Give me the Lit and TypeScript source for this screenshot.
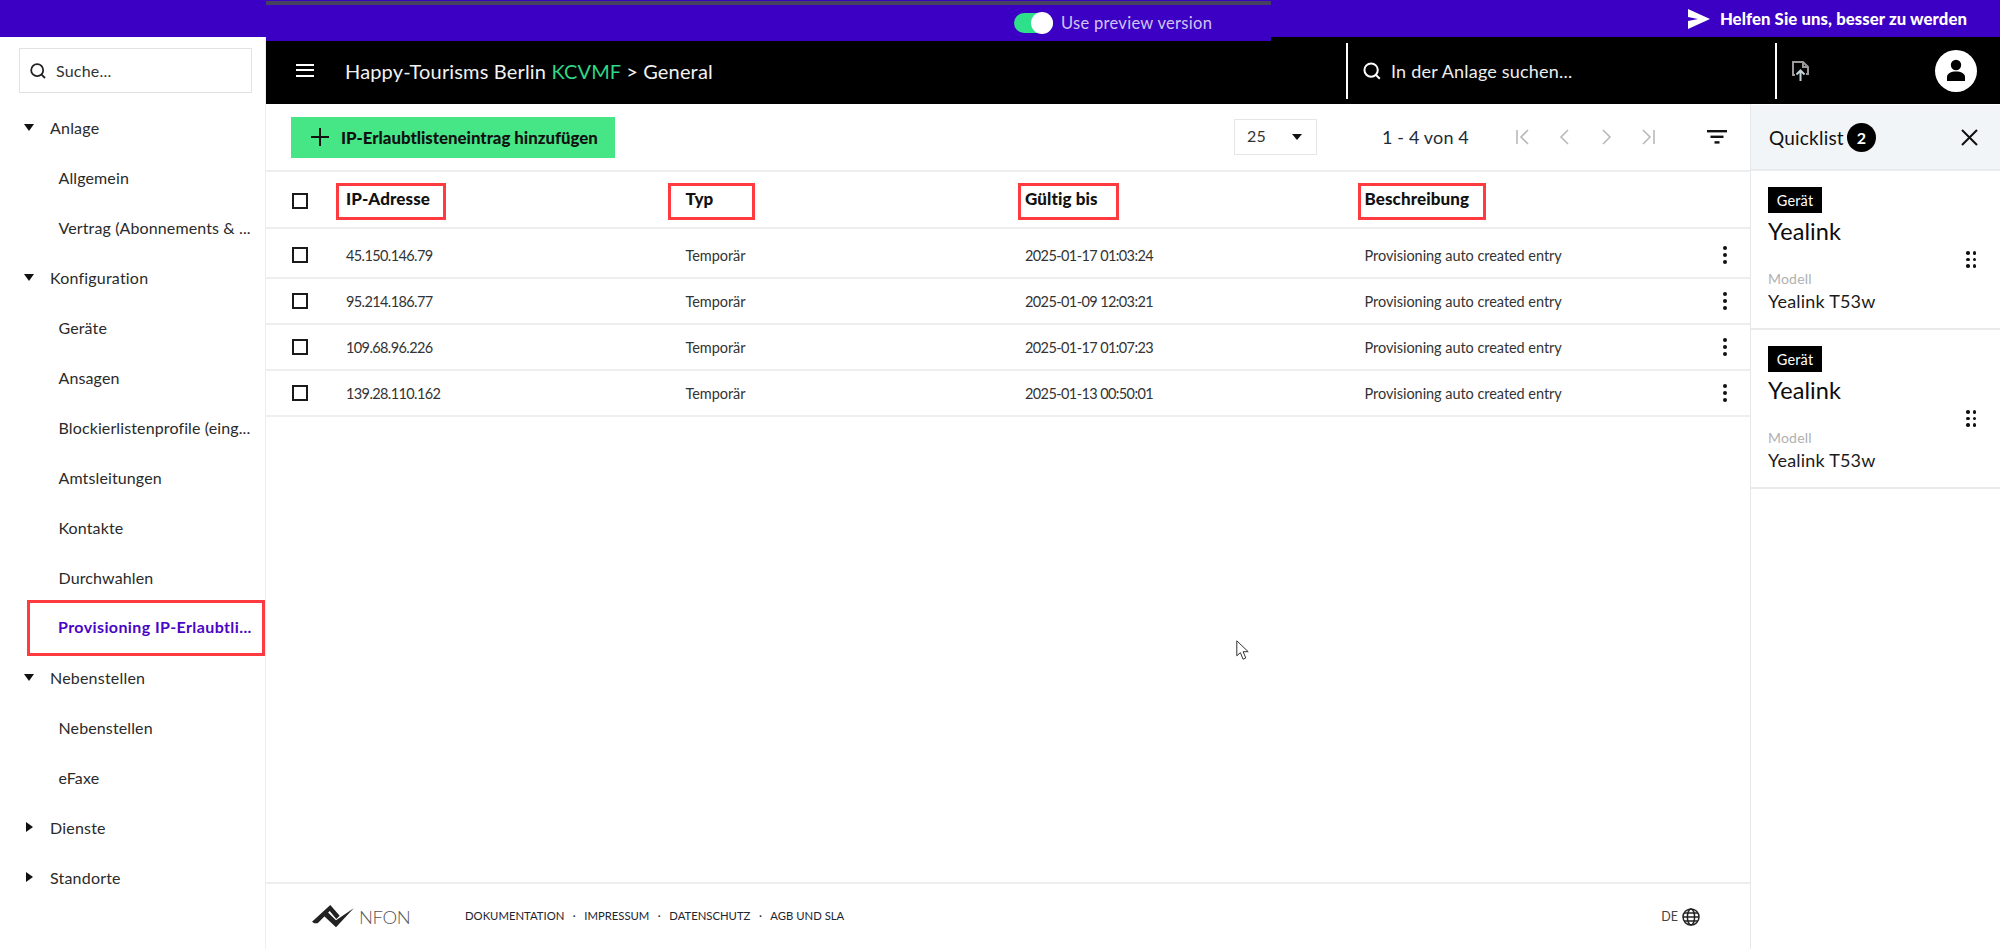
import { LitElement, html, css, svg } from "lit";
import { customElement } from "lit/decorators.js";

type NavItem = { t: string; kind: "open" | "closed" | "child" | "active" };
const NAV: NavItem[] = [
  { t: "Anlage", kind: "open" },
  { t: "Allgemein", kind: "child" },
  { t: "Vertrag (Abonnements & ...", kind: "child" },
  { t: "Konfiguration", kind: "open" },
  { t: "Geräte", kind: "child" },
  { t: "Ansagen", kind: "child" },
  { t: "Blockierlistenprofile (eing...", kind: "child" },
  { t: "Amtsleitungen", kind: "child" },
  { t: "Kontakte", kind: "child" },
  { t: "Durchwahlen", kind: "child" },
  { t: "Provisioning IP-Erlaubtli...", kind: "active" },
  { t: "Nebenstellen", kind: "open" },
  { t: "Nebenstellen", kind: "child" },
  { t: "eFaxe", kind: "child" },
  { t: "Dienste", kind: "closed" },
  { t: "Standorte", kind: "closed" },
];
const ROWS = [
  ["45.150.146.79", "2025-01-17 01:03:24"],
  ["95.214.186.77", "2025-01-09 12:03:21"],
  ["109.68.96.226", "2025-01-17 01:07:23"],
  ["139.28.110.162", "2025-01-13 00:50:01"],
];
const HEADS = [
  { t: "IP-Adresse", off: 10, w: 110 },
  { t: "Typ", off: 18, w: 87 },
  { t: "Gültig bis", off: 7, w: 101 },
  { t: "Beschreibung", off: 7, w: 128 },
];

const searchIcon = (c: string, s: number) => html`<svg width=${s} height=${s} viewBox="0 0 18 18" fill="none" stroke=${c} stroke-width="1.8"><circle cx="8.2" cy="8.2" r="6"/><path d="M12.6 12.6 16 16"/></svg>`;
const pager = (d: string) => html`<svg width="18" height="18" viewBox="0 0 18 18" fill="none" stroke="#b9b9b9" stroke-width="1.6"><path d=${d}/></svg>`;

@customElement("app-root")
export class AppRoot extends LitElement {
  static styles = css`
    :host { display: block; height: 949px; overflow: hidden; position: relative; background: #fff; font-family: Lato, "Liberation Sans", sans-serif; color: #1c1c1c; letter-spacing: .2px; }
    * { box-sizing: border-box; }
    .topbar { height: 37px; background: #3c00c4; display: flex; justify-content: flex-end; align-items: center; padding: 0 33px 0 0; gap: 10px; color: #fff; font-weight: 900; font-size: 16.7px; letter-spacing: .1px; }
    .preview { position: absolute; left: 266px; top: 0; width: 1005px; height: 41px; background: #3c00c4; border-top: 1px solid #3c00c4; display: flex; align-items: center; padding: 4px 0 0 748px; gap: 8px; color: #cfc4f2; font-size: 16.5px; letter-spacing: .3px; z-index: 2; }
    .preview::before { content: ""; position: absolute; left: 0; right: 0; top: 0; height: 4px; background: #45415f; }
    .toggle { width: 39px; height: 20px; border-radius: 10px; background: #2fe08a; position: relative; flex: none; }
    .toggle i { position: absolute; right: 0; top: -1px; width: 22px; height: 22px; border-radius: 50%; background: #fff; }
    .body { display: flex; height: 912px; }
    aside { width: 266px; flex: none; border-right: 1px solid #eceef0; display: flex; flex-direction: column; padding-top: 11px; }
    .side-search { margin: 0 13px 0 19px; height: 45px; border: 1px solid #e2e2e2; display: flex; align-items: center; gap: 9px; padding: 0 0 0 9px; font-size: 16px; color: #333; }
    .nav { margin-top: 9px; display: flex; flex-direction: column; }
    .nav-row { height: 50px; display: flex; align-items: center; font-size: 16px; color: #2a2a2a; white-space: nowrap; }
    .nav-row.parent { padding-left: 24px; gap: 15px; }
    .nav-row.child { padding-left: 58.5px; letter-spacing: .12px; }
    .nav-row.active { padding: 0 0 4px 28px; margin: -2px 0 -4px 27px; border: 3px solid #ff3b40; color: #4a06c4; font-weight: 700; height: 56px; width: 238px; position: relative; letter-spacing: .4px; }
    .caret-wrap { width: 11px; display: flex; flex: none; }
    .caret-open { width: 0; height: 0; border-left: 5.5px solid transparent; border-right: 5.5px solid transparent; border-top: 7px solid #111; }
    .caret-closed { width: 0; height: 0; border-top: 5.5px solid transparent; border-bottom: 5.5px solid transparent; border-left: 7px solid #111; margin-left: 2px; }
    .right { flex: 1; display: flex; flex-direction: column; min-width: 0; }
    header { height: 67px; background: #000; color: #fff; display: flex; align-items: center; flex: none; }
    .burger { margin-left: 30px; width: 18px; height: 13px; border-top: 2.5px solid #fff; border-bottom: 2.5px solid #fff; position: relative; flex: none; }
    .burger::after { content: ""; position: absolute; left: 0; right: 0; top: 2.7px; height: 2.5px; background: #fff; }
    .title { margin-left: 31px; font-size: 20px; width: 1001px; white-space: nowrap; color: #f2f2f2; letter-spacing: .16px; }
    .title b { font-weight: 400; color: #2fd884; }
    .vline { width: 2px; height: 56px; background: #fff; flex: none; }
    .hsearch { width: 427px; padding-left: 14px; display: flex; align-items: center; gap: 9px; font-size: 18px; color: #eee; letter-spacing: .2px; }
    .upload { margin-left: 13.5px; display: flex; }
    .avatar { margin-left: 124px; width: 42px; height: 42px; border-radius: 50%; background: #fff; display: flex; align-items: center; justify-content: center; flex: none; }
    .under { flex: 1; display: flex; min-height: 0; }
    main { width: 1485px; flex: none; display: flex; flex-direction: column; border-right: 1px solid #e6e8ea; }
    .tools { height: 68px; flex: none; border-bottom: 2px solid #eceef0; display: flex; align-items: center; padding: 0 0 0 25px; }
    .add { width: 324px; height: 41px; background: #46e585; display: flex; align-items: center; gap: 12px; padding-left: 20px; font-weight: 900; font-size: 16.8px; color: #111; letter-spacing: 0; white-space: nowrap; }
    .select { margin-left: 619px; width: 83px; height: 36px; border: 1px solid #e6e6e6; display: flex; align-items: center; justify-content: space-between; padding: 0 14px 4px 12px; font-size: 16px; color: #333; }
    .select i { width: 0; height: 0; border-left: 5px solid transparent; border-right: 5px solid transparent; border-top: 6px solid #111; margin-top: 4px; }
    .count { margin-left: 65px; width: 86px; font-size: 18px; color: #1d2b3a; white-space: nowrap; letter-spacing: .15px; }
    .pager { margin-left: 46px; display: flex; gap: 23.5px; }
    .filter { margin-left: 50px; display: flex; }
    .grid-row { display: grid; grid-template-columns: 80px 339.5px 339.5px 339.5px 1fr 50px; align-items: center; border-bottom: 2px solid #eceef0; }
    .grid-row.head { height: 57px; font-weight: 900; font-size: 17px; color: #111; letter-spacing: .1px; }
    .grid-row.row { height: 46px; font-size: 14.5px; color: #333; letter-spacing: -.05px; }
    .grid-row.row.first { height: 50px; padding-top: 4px; }
    .num { letter-spacing: -.6px; }
    .cb { width: 16px; height: 16px; border: 2px solid #1a1a1a; margin-left: 26px; }
    .head .cb { margin-top: 2px; }
    .head-cell { align-self: start; padding-top: 11px; display: flex; }
    .marked { display: block; border: 3px solid #ff3b40; height: 37px; line-height: 25px; }
    .more { display: flex; flex-direction: column; gap: 3px; align-items: center; width: 4px; margin-left: 23px; }
    .more i { width: 4px; height: 4px; border-radius: 50%; background: #111; flex: none; }
    .spacer { flex: 1; }
    footer { height: 67px; flex: none; border-top: 2px solid #eceef0; display: flex; align-items: center; padding: 0 0 0 46px; font-size: 11.3px; color: #1d2430; letter-spacing: 0; }
    .logo { display: flex; align-items: center; gap: 3px; color: #555; font-size: 18.5px; font-weight: 300; width: 153px; letter-spacing: -.4px; flex: none; }
    .links { display: flex; gap: 8.5px; white-space: nowrap; text-transform: uppercase; margin-top: -3px; }
    .lang { margin-left: auto; margin-right: 50px; display: flex; align-items: center; gap: 4px; color: #444; font-size: 12.5px; }
    .quick { flex: 1; display: flex; flex-direction: column; padding-top: 1px; }
    .qhead { height: 66px; flex: none; background: #f1f5f8; border-bottom: 2px solid #e8eaec; display: flex; align-items: center; padding: 0 22px 0 18px; font-size: 19px; color: #111; }
    .qbadge { width: 29px; height: 29px; border-radius: 50%; background: #000; color: #fff; display: flex; align-items: center; justify-content: center; font-size: 16px; font-weight: 700; margin-left: 3px; letter-spacing: 0; }
    .qclose { margin-left: auto; display: flex; }
    .card { height: 159px; flex: none; border-bottom: 2px solid #e8eaec; padding: 16px 24px 0 17px; display: flex; align-items: center; }
    .card-main { flex: 1; display: flex; flex-direction: column; align-self: flex-start; }
    .tag { width: 54px; height: 26px; background: #000; color: #fff; font-size: 14.5px; display: flex; align-items: center; justify-content: center; }
    .name { font-size: 23.5px; margin-top: 3px; color: #0c0c0c; line-height: 30px; letter-spacing: .1px; }
    .mlabel { font-size: 14px; color: #b0b0b0; margin-top: 24px; line-height: 18px; }
    .mval { font-size: 18px; color: #1b1b1b; line-height: 26px; margin-top: 0; }
    .dots { display: grid; grid-template-columns: 3.5px 3.5px; gap: 3.2px 3px; margin-top: 4px; }
    .dots i { width: 3.5px; height: 3.5px; border-radius: 50%; background: #111; }
    .cursor { position: absolute; left: 1236px; top: 640px; z-index: 3; display: flex; }
  `;

  private more() { return html`<div class="more"><i></i><i></i><i></i></div>`; }

  private logo() {
    return svg`<svg width="44" height="23" viewBox="0 0 44 23" style="flex:none"><path fill="#222" d="M0 16.7 18.3 0 27.7 10.7 24.3 14 17.7 6 5.7 18.3H2.3ZM11.7 10.7 15.7 7.3 24 15.3 41.7 3.3 24 22.3Z"/></svg>`;
  }

  render() {
    return html`
      <div class="topbar">
        <svg width="22" height="20" viewBox="0 0 22 20"><path fill="#fff" d="M0 0 22 10 0 20V12l10-2-10-2Z"/></svg>
        <span>Helfen Sie uns, besser zu werden</span>
      </div>
      <div class="preview"><div class="toggle"><i></i></div><span>Use preview version</span></div>
      <div class="body">
        <aside>
          <div class="side-search">${searchIcon("#222", 18)}<span>Suche...</span></div>
          <div class="nav">
            ${NAV.map((n) =>
              n.kind === "child" ? html`<div class="nav-row child">${n.t}</div>`
              : n.kind === "active" ? html`<div class="nav-row active">${n.t}</div>`
              : html`<div class="nav-row parent"><span class="caret-wrap"><i class=${n.kind === "open" ? "caret-open" : "caret-closed"}></i></span>${n.t}</div>`)}
          </div>
        </aside>
        <div class="right">
          <header>
            <div class="burger"></div>
            <div class="title">Happy-Tourisms Berlin <b>KCVMF</b> &gt; General</div>
            <div class="vline"></div>
            <div class="hsearch">${searchIcon("#fff", 20)}<span>In der Anlage suchen...</span></div>
            <div class="vline"></div>
            <div class="upload">
              <svg width="20" height="22" viewBox="0 0 20 22" fill="none" stroke="#9a9a9a" stroke-width="2"><path d="M4 15H2V2h10l5 5v7h-2"/><path d="M12 2v5h5" /><path stroke="#c4d2da" d="M9.5 21V11M5.5 14.5l4-4 4 4"/></svg>
            </div>
            <div class="avatar">
              <svg width="20" height="23" viewBox="0 0 20 23"><circle cx="10" cy="6" r="5.2" fill="#000"/><path fill="#000" d="M1 22v-4c0-3.5 4-5.5 9-5.5s9 2 9 5.5v4Z"/></svg>
            </div>
          </header>
          <div class="under">
            <main>
              <div class="tools">
                <div class="add">
                  <svg width="18" height="18" viewBox="0 0 18 18" stroke="#111" stroke-width="2" style="flex:none"><path d="M9 0v18M0 9h18"/></svg>
                  <span>IP-Erlaubtlisteneintrag hinzufügen</span>
                </div>
                <div class="select"><span>25</span><i></i></div>
                <div class="count">1 - 4 von 4</div>
                <div class="pager">
                  ${pager("M3 2v14M14 2 7 9l7 7")}${pager("M12 2 5 9l7 7")}${pager("M6 2l7 7-7 7")}${pager("M15 2v14M4 2l7 7-7 7")}
                </div>
                <div class="filter">
                  <svg width="20" height="14" viewBox="0 0 20 14" fill="#111"><rect width="20" height="2.4"/><rect x="3.5" y="5.6" width="13" height="2.4"/><rect x="7.5" y="11.2" width="5" height="2.4"/></svg>
                </div>
              </div>
              <div class="grid-row head">
                <div class="cb"></div>
                ${HEADS.map((h) => html`<div class="head-cell"><span class="marked" style="width:${h.w}px;margin-left:${-h.off}px;padding-left:${h.off - 3}px">${h.t}</span></div>`)}
                <div></div>
              </div>
              ${ROWS.map((r, i) => html`
                <div class="grid-row row ${i === 0 ? "first" : ""}">
                  <div class="cb"></div>
                  <div class="num">${r[0]}</div><div>Temporär</div><div class="num">${r[1]}</div><div>Provisioning auto created entry</div>
                  ${this.more()}
                </div>`)}
              <div class="spacer"></div>
              <footer>
                <div class="logo">${this.logo()}<span>NFON</span></div>
                <div class="links"><span>Dokumentation</span><span>·</span><span>Impressum</span><span>·</span><span>Datenschutz</span><span>·</span><span>AGB und SLA</span></div>
                <div class="lang"><span>DE</span>
                  <svg width="18" height="18" viewBox="0 0 18 18" fill="none" stroke="#222" stroke-width="1.5"><circle cx="9" cy="9" r="8"/><ellipse cx="9" cy="9" rx="3.6" ry="8"/><path d="M1 9h16M2 5h14M2 13h14"/></svg>
                </div>
              </footer>
            </main>
            <section class="quick">
              <div class="qhead"><span>Quicklist</span><div class="qbadge">2</div>
                <div class="qclose"><svg width="17" height="17" viewBox="0 0 17 17" stroke="#111" stroke-width="2"><path d="M1 1l15 15M16 1 1 16"/></svg></div>
              </div>
              ${[0, 1].map(() => html`
                <div class="card">
                  <div class="card-main">
                    <div class="tag">Gerät</div>
                    <div class="name">Yealink</div>
                    <div class="mlabel">Modell</div>
                    <div class="mval">Yealink T53w</div>
                  </div>
                  <div class="dots"><i></i><i></i><i></i><i></i><i></i><i></i></div>
                </div>`)}
            </section>
          </div>
        </div>
      </div>
      <div class="cursor">
        <svg width="14" height="21" viewBox="0 0 14 21"><path fill="#fff" stroke="#333" stroke-width="1" d="M.8.8v15l3.6-3.2 2.6 6.6 2.8-1.2-2.7-6.3h5.1Z"/></svg>
      </div>
    `;
  }
}
